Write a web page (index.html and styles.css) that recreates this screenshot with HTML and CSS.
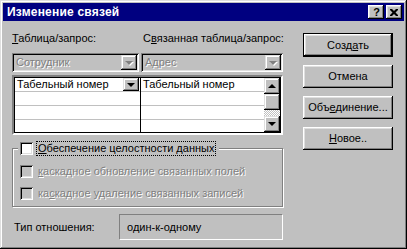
FILE: index.html
```html
<!DOCTYPE html>
<html>

<head>
    <meta charset="UTF-8">
    <title>Изменение связей</title>
    <link rel="stylesheet" href="styles.css">
</head>

<body>
    <div class="window">
        <div class="titlebar">
            <span class="title">Изменение связей</span>
            <div class="cap-btns">
                <span class="cap-btn cap-help">?</span>
                <span class="cap-btn cap-close">
                    <svg width="8" height="7" viewBox="0 0 8 7"><path d="M0 0h2l2 2 2-2h2v1l-2.5 2.5L8 6v1H6L4 5 2 7H0V6l2.5-2.5L0 1z" fill="#000"/></svg>
                </span>
            </div>
        </div>
        <div class="content">
            <div class="main">
                <div class="labels">
                    <span class="lbl lbl-left"><u>Т</u>аблица/запрос:</span>
                    <span class="lbl">С<u>в</u>язанная таблица/запрос:</span>
                </div>
                <div class="combos">
                    <div class="combo combo-left">
                        <span class="combo-text disabled-text">Сотрудник</span>
                        <span class="drop-btn"><i class="arrow arrow-down arrow-off"></i></span>
                    </div>
                    <div class="combo combo-right">
                        <span class="combo-text disabled-text">Адрес</span>
                        <span class="drop-btn"><i class="arrow arrow-down arrow-off"></i></span>
                    </div>
                </div>
                <div class="grid">
                    <div class="col col-left">
                        <div class="row">
                            <span class="cell-text">Табельный номер</span>
                            <span class="drop-btn small"><i class="arrow arrow-down"></i></span>
                        </div>
                        <div class="row"></div>
                        <div class="row"></div>
                        <div class="row last"></div>
                    </div>
                    <div class="col col-right">
                        <div class="row"><span class="cell-text">Табельный номер</span></div>
                        <div class="row"></div>
                        <div class="row"></div>
                        <div class="row last"></div>
                    </div>
                    <div class="vscroll">
                        <span class="sb-btn"><i class="arrow arrow-up"></i></span>
                        <span class="sb-thumb"></span>
                        <span class="sb-track"></span>
                        <span class="sb-btn"><i class="arrow arrow-down"></i></span>
                    </div>
                </div>
                <fieldset class="group">
                    <legend class="group-title">
                        <span class="checkbox"></span>
                        <span class="focus"><u>О</u>беспечение целостности данных</span>
                    </legend>
                    <div class="check-row">
                        <span class="checkbox off"></span>
                        <span class="disabled-text"><u>к</u>аскадное обновление связанных полей</span>
                    </div>
                    <div class="check-row">
                        <span class="checkbox off"></span>
                        <span class="disabled-text">ка<u>с</u>кадное удаление связанных записей</span>
                    </div>
                </fieldset>
                <div class="reltype">
                    <span class="reltype-label">Тип отношения:</span>
                    <div class="reltype-box">один-к-одному</div>
                </div>
            </div>
            <div class="side">
                <div class="btn btn-default"><span>Созд<u>а</u>ть</span></div>
                <div class="btn"><span>Отмена</span></div>
                <div class="btn"><span>Объ<u>е</u>динение...</span></div>
                <div class="btn"><span><u>Н</u>овое..</span></div>
            </div>
        </div>
    </div>
</body>

</html>
```

FILE: styles.css
```css
* {
    padding: 0;
    margin: 0;
    box-sizing: border-box;
}

body {
    background: #c0c0c0;
    font-family: "Liberation Sans", Arial, sans-serif;
    font-size: 11px;
    line-height: 13px;
    color: #000;
}

u {
    text-decoration: underline;
    text-underline-offset: 1px;
}

.window {
    width: 407px;
    height: 249px;
    padding: 3px;
    background: #c0c0c0;
    box-shadow: inset -1px -1px #000, inset 1px 1px #dfdfdf, inset -2px -2px #808080, inset 2px 2px #fff;
}

/* заголовок окна */
.titlebar {
    height: 18px;
    background: #000080;
    display: flex;
    align-items: center;
    justify-content: space-between;
    padding: 0 2px 0 4px;
}

.title {
    color: #fff;
    font-weight: bold;
    font-size: 12px;
    letter-spacing: 0.2px;
}

.cap-btns {
    display: flex;
    gap: 2px;
}

.cap-btn {
    width: 16px;
    height: 14px;
    background: #c0c0c0;
    box-shadow: inset -1px -1px #000, inset 1px 1px #fff, inset -2px -2px #808080, inset 2px 2px #dfdfdf;
    display: flex;
    align-items: center;
    justify-content: center;
}

.cap-help {
    font-weight: bold;
    font-size: 11px;
    padding-left: 1px;
}

/* основная часть */
.content {
    display: flex;
}

.main {
    width: 280px;
    padding: 11px 0 0 9px;
}

.side {
    width: 90px;
    margin-left: 20px;
    padding-top: 12px;
    display: flex;
    flex-direction: column;
    gap: 8px;
}

.labels {
    display: flex;
    height: 13px;
    white-space: nowrap;
}

.lbl-left {
    width: 131px;
    flex-shrink: 0;
}

.combos {
    display: flex;
    gap: 2px;
    margin-top: 8px;
    width: 271px;
}

.combo {
    height: 19px;
    display: flex;
    align-items: center;
    justify-content: space-between;
    padding: 2px;
    box-shadow: inset 1px 1px #808080, inset -1px -1px #fff, inset 2px 2px #000, inset -2px -2px #dfdfdf;
}

.combo-left {
    width: 127px;
}

.combo-right {
    flex: 1;
}

.combo-text {
    padding-left: 2px;
}

.disabled-text {
    color: #808080;
    text-shadow: 1px 1px #fff;
}

.drop-btn {
    width: 16px;
    height: 15px;
    background: #c0c0c0;
    box-shadow: inset -1px -1px #000, inset 1px 1px #dfdfdf, inset -2px -2px #808080, inset 2px 2px #fff;
    display: flex;
    align-items: center;
    justify-content: center;
}

.drop-btn.small {
    height: 13px;
}

.arrow {
    width: 0;
    height: 0;
    border-left: 4px solid transparent;
    border-right: 4px solid transparent;
}

.arrow-down {
    border-top: 4px solid #000;
}

.arrow-up {
    border-bottom: 4px solid #000;
}

.arrow-off {
    border-top-color: #808080;
    filter: drop-shadow(1px 1px 0 #fff);
}

/* таблица полей */
.grid {
    margin-top: 3px;
    width: 271px;
    display: flex;
    border: 2px solid;
    border-color: #808080 #fff #fff #808080;
    box-shadow: inset 1px 1px #000, inset -1px -1px #000;
    background: #fff;
}

.col {
    padding-top: 1px;
}

.col-left {
    width: 126px;
    border-right: 1px solid #000;
    margin-left: 1px;
}

.col-right {
    flex: 1;
}

.row {
    height: 14px;
    border-bottom: 1px solid #c0c0c0;
    display: flex;
    align-items: center;
    justify-content: space-between;
    padding-left: 2px;
}

.row.last {
    border-bottom: none;
    height: 13px;
}

.row .drop-btn {
    margin-right: 1px;
}

.vscroll {
    width: 16px;
    display: flex;
    flex-direction: column;
    margin: 1px 1px 1px 0;
}

.sb-btn,
.sb-thumb {
    height: 16px;
    background: #c0c0c0;
    box-shadow: inset -1px -1px #000, inset 1px 1px #dfdfdf, inset -2px -2px #808080, inset 2px 2px #fff;
    display: flex;
    align-items: center;
    justify-content: center;
}

.sb-track {
    flex: 1;
    background: repeating-conic-gradient(#c0c0c0 0 25%, #fff 0 50%) 0 0 / 2px 2px;
}

/* группа флажков */
.group {
    margin-top: 6px;
    width: 271px;
    border: 1px solid #808080;
    box-shadow: inset 1px 1px #fff, 1px 1px #fff;
    padding: 0 0 6px 5px;
    min-inline-size: 0;
}

.group-title {
    display: flex;
    align-items: center;
    gap: 4px;
    padding: 1px 4px 1px 2px;
    background: #c0c0c0;
}

.checkbox {
    width: 13px;
    height: 13px;
    background: #fff;
    box-shadow: inset 1px 1px #808080, inset -1px -1px #fff, inset 2px 2px #000, inset -2px -2px #dfdfdf;
}

.checkbox.off {
    background: #c0c0c0;
}

.focus {
    outline: 1px dotted #000;
    padding: 0 1px;
}

.check-row {
    display: flex;
    align-items: center;
    gap: 5px;
    padding-left: 2px;
    margin-top: 9px;
}

.check-row + .check-row {
    margin-top: 9px;
}

/* тип отношения */
.reltype {
    display: flex;
    align-items: center;
    margin-top: 7px;
}

.reltype-label {
    width: 107px;
    padding-left: 2px;
}

.reltype-box {
    width: 164px;
    height: 26px;
    padding-left: 7px;
    display: flex;
    align-items: center;
    border: 1px solid;
    border-color: #808080 #fff #fff #808080;
}

/* кнопки */
.btn {
    height: 23px;
    background: #c0c0c0;
    box-shadow: inset -1px -1px #000, inset 1px 1px #fff, inset -2px -2px #808080, inset 2px 2px #dfdfdf;
    display: flex;
    align-items: center;
    justify-content: center;
}

.btn-default {
    height: 24px;
    border: 1px solid #000;
    box-shadow: inset -1px -1px #000, inset 1px 1px #fff, inset -2px -2px #808080, inset 2px 2px #dfdfdf;
}
```
